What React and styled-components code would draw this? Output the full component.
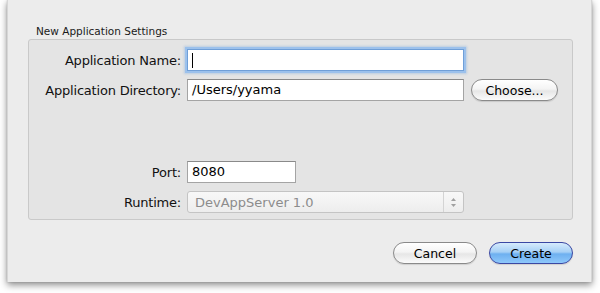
import styled, { createGlobalStyle } from 'styled-components'

const GlobalStyle = createGlobalStyle`
  html, body {
    margin: 0;
    padding: 0;
    background: #ffffff;
  }
  body {
    font-family: 'DejaVu Sans', 'Liberation Sans', sans-serif;
    color: #000;
  }
`

const Page = styled.div`
  width: 600px;
  height: 293px;
  overflow: hidden;
  padding-left: 7px;
  box-sizing: border-box;
`

const Window = styled.div`
  width: 585px;
  height: 282px;
  box-sizing: border-box;
  background: #ececec;
  border-left: 1px solid #d6d6d6;
  border-right: 1px solid #d6d6d6;
  box-shadow: 0 3px 7px rgba(0, 0, 0, 0.45), 0 0 2px rgba(0, 0, 0, 0.15);
  padding: 24px 18px 0 20px;
  display: flex;
  flex-direction: column;
`

const GroupTitle = styled.div`
  font-size: 10.5px;
  padding-left: 8px;
  height: 15px;
  line-height: 14px;
  color: #1a1a1a;
`

const GroupBox = styled.div`
  height: 181px;
  box-sizing: border-box;
  background: #e4e4e4;
  border: 1px solid #c9c9c9;
  border-radius: 3px;
  padding-top: 9px;
  display: flex;
  flex-direction: column;
  gap: 8px;
`

const Row = styled.div`
  display: flex;
  align-items: center;
  gap: 6px;
  margin-top: ${(p) => p.$top || 0}px;
`

const Label = styled.div`
  width: 152px;
  text-align: right;
  font-size: 13px;
  letter-spacing: -0.2px;
  color: #111;
  flex: none;
`

const TextField = styled.div`
  width: ${(p) => p.$w}px;
  height: 22px;
  box-sizing: border-box;
  background: #fff;
  border: 1px solid #a4a4a4;
  border-top-color: #8a8a8a;
  font-size: 13px;
  line-height: 20px;
  padding-left: 4px;
  display: flex;
  align-items: center;
  ${(p) =>
    p.$focus &&
    `
    border: 1px solid #6f9fd8;
    box-shadow: 0 0 0 2px #9cc1ec, 0 0 2px 3px rgba(110, 160, 220, 0.35);
  `}
`

const Caret = styled.span`
  width: 1px;
  height: 15px;
  background: #000;
`

const PillButton = styled.button`
  width: ${(p) => p.$w}px;
  height: 22px;
  box-sizing: border-box;
  border-radius: 11px;
  font-family: 'DejaVu Sans', 'Liberation Sans', sans-serif;
  font-size: 12.5px;
  color: #000;
  padding: 0;
  margin-left: ${(p) => p.$ml || 0}px;
  border: 1px solid ${(p) => (p.$primary ? '#3b48a3' : '#8a8a8a')};
  background: ${(p) =>
    p.$primary
      ? 'linear-gradient(#d6ebfc 0%, #a6d0f6 45%, #6eb0f0 55%, #8ec8fb 100%)'
      : 'linear-gradient(#ffffff 0%, #f4f4f4 45%, #e6e6e6 55%, #fbfbfb 100%)'};
  box-shadow: 0 1px 1px rgba(0, 0, 0, 0.12);
`

const Popup = styled.div`
  width: 277px;
  height: 22px;
  box-sizing: border-box;
  border: 1px solid #c4c4c4;
  border-radius: 3px;
  background: linear-gradient(#f8f8f8, #ededed);
  display: flex;
  align-items: center;
  font-size: 13px;
  color: #8c8c8c;
`

const PopupText = styled.div`
  flex: 1;
  padding-left: 7px;
`

const PopupArrows = styled.div`
  width: 19px;
  height: 100%;
  border-left: 1px solid #d4d4d4;
  display: flex;
  align-items: center;
  justify-content: center;
`

const Footer = styled.div`
  display: flex;
  justify-content: flex-end;
  gap: 12px;
  margin-top: 22px;
`

export default function App() {
  return (
    <>
      <GlobalStyle />
      <Page>
        <Window>
          <GroupTitle>New Application Settings</GroupTitle>
          <GroupBox>
            <Row>
              <Label>Application Name:</Label>
              <TextField $w={277} $focus>
                <Caret />
              </TextField>
            </Row>
            <Row>
              <Label>Application Directory:</Label>
              <TextField $w={277}>/Users/yyama</TextField>
              <PillButton $w={87} $ml={1}>
                Choose...
              </PillButton>
            </Row>
            <Row $top={52}>
              <Label>Port:</Label>
              <TextField $w={109}>8080</TextField>
            </Row>
            <Row>
              <Label>Runtime:</Label>
              <Popup>
                <PopupText>DevAppServer 1.0</PopupText>
                <PopupArrows>
                  <svg width="7" height="11" viewBox="0 0 7 11">
                    <path d="M3.5 1 L6 4 L1 4 Z" fill="#a0a0a0" />
                    <path d="M3.5 10 L6 7 L1 7 Z" fill="#a0a0a0" />
                  </svg>
                </PopupArrows>
              </Popup>
            </Row>
          </GroupBox>
          <Footer>
            <PillButton $w={84}>Cancel</PillButton>
            <PillButton $w={84} $primary>
              Create
            </PillButton>
          </Footer>
        </Window>
      </Page>
    </>
  )
}
